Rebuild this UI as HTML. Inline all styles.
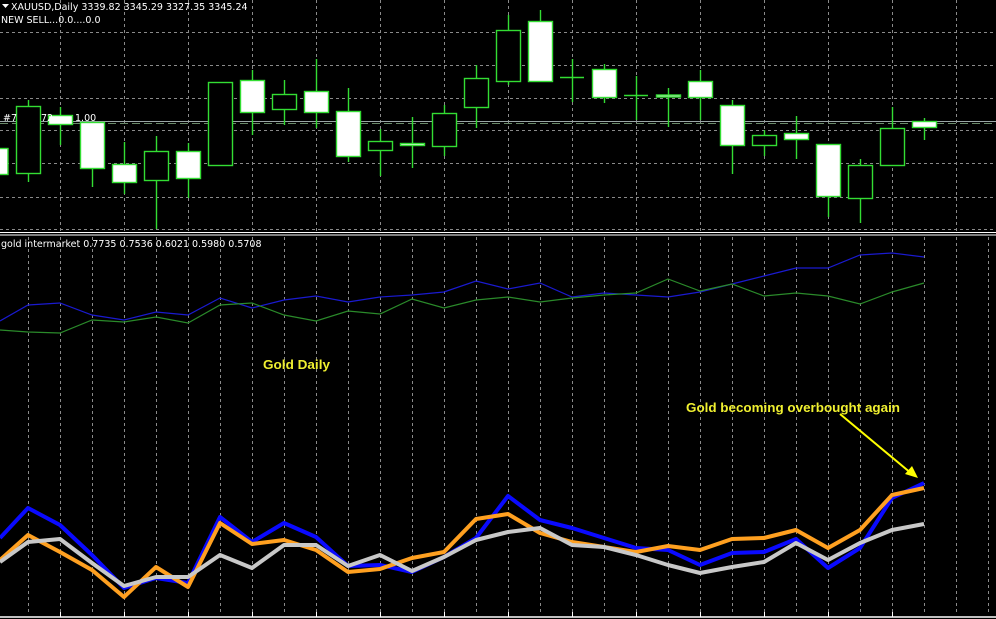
<!DOCTYPE html>
<html><head><meta charset="utf-8">
<style>
html,body{margin:0;padding:0;background:#000;}
body{width:996px;height:619px;overflow:hidden;position:relative;font-family:"Liberation Sans",sans-serif;}
svg{position:absolute;left:0;top:0;}
.t{font-family:"DejaVu Sans","Liberation Sans",sans-serif;font-size:9.5px;fill:#fff;}
.y{font-family:"Liberation Sans",sans-serif;font-size:12.5px;font-weight:bold;fill:#f0f030;}
</style></head><body>
<svg width="996" height="619" viewBox="0 0 996 619">
<rect width="996" height="619" fill="#000"/>
<g stroke="#8a8a8a" stroke-width="1" stroke-dasharray="3,3" fill="none">
<path d="M0 32.5H996M0 65.5H996M0 98.5H996M0 130.5H996M0 163.5H996M0 197.5H996M0 229.5H996"/>
<path d="M60.5 0V231M124.5 0V231M188.5 0V231M252.5 0V231M316.5 0V231M380.5 0V231M444.5 0V231M508.5 0V231M572.5 0V231M636.5 0V231M700.5 0V231M764.5 0V231M828.5 0V231M892.5 0V231M956.5 0V231"/>
</g>
<g stroke="#8a8a8a" stroke-width="1" stroke-dasharray="3,3" fill="none">
<path d="M28.5 237V615M60.5 237V615M92.5 237V615M124.5 237V615M156.5 237V615M188.5 237V615M220.5 237V615M252.5 237V615M284.5 237V615M316.5 237V615M348.5 237V615M380.5 237V615M412.5 237V615M444.5 237V615M476.5 237V615M508.5 237V615M540.5 237V615M572.5 237V615M604.5 237V615M636.5 237V615M668.5 237V615M700.5 237V615M732.5 237V615M764.5 237V615M796.5 237V615M828.5 237V615M860.5 237V615M892.5 237V615M924.5 237V615M956.5 237V615M988.5 237V615"/>
</g>
<path d="M0 121.5H996" stroke="#9aa6a6" stroke-width="1"/>
<path d="M0 123.5H996" stroke="#6a8a6a" stroke-width="1" stroke-dasharray="8,4"/>
<g stroke="#33dd33" stroke-width="1.4">
<path d="M28.5 100V182M60.5 107V145M92.5 122V187M124.5 142V194M156.5 136V229M188.5 143V198M220.5 82V166M252.5 70V135M284.5 80V125M316.5 59V128M348.5 88V162M380.5 129V176M412.5 117V168M444.5 105V156M476.5 65V128M508.5 15V85M540.5 10V81M572.5 59V102M604.5 64V103M636.5 76V120M668.5 88V127M700.5 70V120M732.5 100V174M764.5 130V156M796.5 116V159M828.5 144V217M860.5 159V223M892.5 107V165M924.5 118V140"/>
<rect x="-4" y="148.5" width="12" height="26" fill="#fff"/>
<rect x="16.5" y="106.5" width="24" height="67" fill="#000"/>
<rect x="48.5" y="115.5" width="24" height="9" fill="#fff"/>
<rect x="80.5" y="122.5" width="24" height="46" fill="#fff"/>
<rect x="112.5" y="164.5" width="24" height="18" fill="#fff"/>
<rect x="144.5" y="151.5" width="24" height="29" fill="#000"/>
<rect x="176.5" y="151.5" width="24" height="27" fill="#fff"/>
<rect x="208.5" y="82.5" width="24" height="83" fill="#000"/>
<rect x="240.5" y="80.5" width="24" height="32" fill="#fff"/>
<rect x="272.5" y="94.5" width="24" height="15" fill="#000"/>
<rect x="304.5" y="91.5" width="24" height="21" fill="#fff"/>
<rect x="336.5" y="111.5" width="24" height="45" fill="#fff"/>
<rect x="368.5" y="141.5" width="24" height="9" fill="#000"/>
<rect x="400.5" y="143.5" width="24" height="2" fill="#fff"/>
<rect x="432.5" y="113.5" width="24" height="33" fill="#000"/>
<rect x="464.5" y="78.5" width="24" height="29" fill="#000"/>
<rect x="496.5" y="30.5" width="24" height="51" fill="#000"/>
<rect x="528.5" y="21.5" width="24" height="60" fill="#fff"/>
<path d="M560 77.5H584"/>
<rect x="592.5" y="69.5" width="24" height="28" fill="#fff"/>
<path d="M624 95.5H648"/>
<rect x="656.5" y="95" width="24" height="2" fill="#fff"/>
<rect x="688.5" y="81.5" width="24" height="16" fill="#fff"/>
<rect x="720.5" y="105.5" width="24" height="40" fill="#fff"/>
<rect x="752.5" y="135.5" width="24" height="10" fill="#000"/>
<rect x="784.5" y="133.5" width="24" height="6" fill="#fff"/>
<rect x="816.5" y="144.5" width="24" height="52" fill="#fff"/>
<rect x="848.5" y="165.5" width="24" height="33" fill="#000"/>
<rect x="880.5" y="128.5" width="24" height="37" fill="#000"/>
<rect x="912.5" y="121.5" width="24" height="6" fill="#fff"/>
</g>
<path d="M2 4H9L5.5 8Z" fill="#fff"/>
<text class="t" x="11" y="10">XAUUSD,Daily  3339.82 3345.29 3327.35 3345.24</text>
<text class="t" x="1" y="23">NEW SELL...0.0....0.0</text>
<text class="t" x="3" y="121">#7</text>
<text class="t" x="41" y="121">72</text>
<text class="t" x="75" y="121">1.00</text>
<path d="M0 232.5H996M0 235H996" stroke="#fff" stroke-width="1"/>
<text class="t" x="1" y="247">gold intermarket 0.7735 0.7536 0.6021 0.5980 0.5708</text>
<polyline fill="none" stroke="#1a1ad0" stroke-width="1.2" points="0,321 28,305 60,303 92,315 124,320 156,312 188,315 220,298 252,308 284,300 316,296 348,302 380,297 412,295 444,292 476,281 508,289 540,283 572,297 604,293 636,295 668,297 700,292 732,284 764,276 796,268 828,268 860,255 892,253 924,257"/>
<polyline fill="none" stroke="#2a8a2a" stroke-width="1.2" points="0,330 28,332 60,333 92,320 124,322 156,317 188,323 220,305 252,303 284,315 316,321 348,311 380,314 412,299 444,308 476,300 508,297 540,302 572,298 604,295 636,293 668,279 700,291 732,284 764,296 796,293 828,296 860,304 892,292 924,283"/>
<polyline fill="none" stroke="#0a0aff" stroke-width="4" stroke-linejoin="round" points="0,538 28,508 60,525 92,555 124,588 156,578 188,583 220,517 252,542 284,523 316,537 348,566 380,565 412,572 444,557 476,538 508,496 540,520 572,528 604,538 636,548 668,550 700,565 732,553 764,552 796,539 828,568 860,548 892,498 924,483"/>
<polyline fill="none" stroke="#ffa020" stroke-width="4" stroke-linejoin="round" points="0,560 28,535 60,552 92,570 124,597 156,567 188,587 220,523 252,544 284,540 316,550 348,572 380,569 412,558 444,552 476,519 508,514 540,533 572,542 604,547 636,552 668,546 700,550 732,539 764,538 796,530 828,548 860,530 892,495 924,488"/>
<polyline fill="none" stroke="#c8c8c8" stroke-width="4" stroke-linejoin="round" points="0,562 28,542 60,539 92,563 124,586 156,577 188,577 220,555 252,568 284,545 316,545 348,566 380,555 412,571 444,557 476,540 508,532 540,528 572,545 604,547 636,555 668,565 700,573 732,567 764,562 796,543 828,560 860,543 892,530 924,524"/>
<path d="M0 617H996" stroke="#fff" stroke-width="1.5"/>
<path d="M60.5 612V617M124.5 612V617M188.5 612V617M252.5 612V617M316.5 612V617M380.5 612V617M444.5 612V617M508.5 612V617M572.5 612V617M636.5 612V617M700.5 612V617M764.5 612V617M828.5 612V617M892.5 612V617" stroke="#fff"/>
<text class="y" x="263" y="369" textLength="67" lengthAdjust="spacingAndGlyphs">Gold Daily</text>
<text class="y" x="686" y="412" textLength="214" lengthAdjust="spacingAndGlyphs">Gold becoming overbought again</text>
<path d="M840 414L912 474" stroke="#ffff00" stroke-width="2"/>
<path d="M918 478L905 474L912 466Z" fill="#ffff00"/>
</svg>
</body></html>
